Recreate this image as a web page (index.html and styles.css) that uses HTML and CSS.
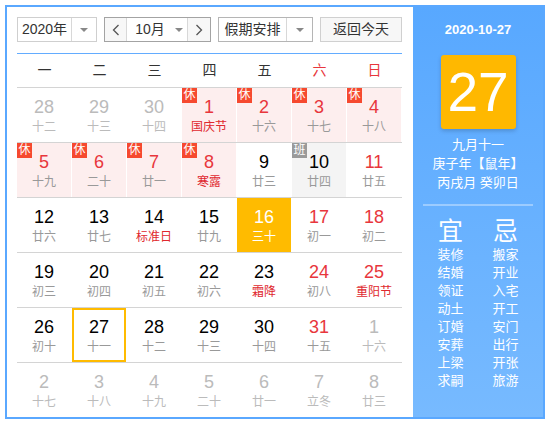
FILE: index.html
```html
<!DOCTYPE html>
<html lang="zh-CN">
<head>
<meta charset="utf-8">
<link rel="stylesheet" href="styles.css">
</head>
<body>
<div class="cal">
  <div class="main">
    <div class="toolbar">
      <div class="sel sel-year">
        <span class="sel-text">2020年</span>
        <span class="sel-arrow"><i class="tri"></i></span>
      </div>
      <div class="sel sel-month">
        <span class="nav nav-prev"><svg width="8" height="12" viewBox="0 0 8 12"><polyline points="6.5,1 1.5,6 6.5,11" fill="none" stroke="#555" stroke-width="1.3"/></svg></span>
        <span class="month-text">10月<i class="tri"></i></span>
        <span class="nav nav-next"><svg width="8" height="12" viewBox="0 0 8 12"><polyline points="1.5,1 6.5,6 1.5,11" fill="none" stroke="#555" stroke-width="1.3"/></svg></span>
      </div>
      <div class="sel sel-holiday">
        <span class="sel-text">假期安排</span>
        <span class="sel-arrow"><i class="tri"></i></span>
      </div>
      <div class="btn-today">返回今天</div>
    </div>
    <div class="week-head">
      <span>一</span><span>二</span><span>三</span><span>四</span><span>五</span><span class="red">六</span><span class="red">日</span>
    </div>
    <div class="row">
      <div class="cell other"><div class="num">28</div><div class="lunar">十二</div></div>
      <div class="cell other"><div class="num">29</div><div class="lunar">十三</div></div>
      <div class="cell other"><div class="num">30</div><div class="lunar">十四</div></div>
      <div class="cell rest"><span class="badge">休</span><div class="num">1</div><div class="lunar fest">国庆节</div></div>
      <div class="cell rest"><span class="badge">休</span><div class="num">2</div><div class="lunar">十六</div></div>
      <div class="cell rest"><span class="badge">休</span><div class="num">3</div><div class="lunar">十七</div></div>
      <div class="cell rest"><span class="badge">休</span><div class="num">4</div><div class="lunar">十八</div></div>
    </div>
    <div class="row">
      <div class="cell rest"><span class="badge">休</span><div class="num">5</div><div class="lunar">十九</div></div>
      <div class="cell rest"><span class="badge">休</span><div class="num">6</div><div class="lunar">二十</div></div>
      <div class="cell rest"><span class="badge">休</span><div class="num">7</div><div class="lunar">廿一</div></div>
      <div class="cell rest"><span class="badge">休</span><div class="num">8</div><div class="lunar fest">寒露</div></div>
      <div class="cell"><div class="num">9</div><div class="lunar">廿三</div></div>
      <div class="cell work"><span class="badge badge-work">班</span><div class="num">10</div><div class="lunar">廿四</div></div>
      <div class="cell weekend"><div class="num">11</div><div class="lunar">廿五</div></div>
    </div>
    <div class="row">
      <div class="cell"><div class="num">12</div><div class="lunar">廿六</div></div>
      <div class="cell"><div class="num">13</div><div class="lunar">廿七</div></div>
      <div class="cell"><div class="num">14</div><div class="lunar fest">标准日</div></div>
      <div class="cell"><div class="num">15</div><div class="lunar">廿九</div></div>
      <div class="cell today"><div class="num">16</div><div class="lunar">三十</div></div>
      <div class="cell weekend"><div class="num">17</div><div class="lunar">初一</div></div>
      <div class="cell weekend"><div class="num">18</div><div class="lunar">初二</div></div>
    </div>
    <div class="row">
      <div class="cell"><div class="num">19</div><div class="lunar">初三</div></div>
      <div class="cell"><div class="num">20</div><div class="lunar">初四</div></div>
      <div class="cell"><div class="num">21</div><div class="lunar">初五</div></div>
      <div class="cell"><div class="num">22</div><div class="lunar">初六</div></div>
      <div class="cell"><div class="num">23</div><div class="lunar fest">霜降</div></div>
      <div class="cell weekend"><div class="num">24</div><div class="lunar">初八</div></div>
      <div class="cell weekend"><div class="num">25</div><div class="lunar fest">重阳节</div></div>
    </div>
    <div class="row">
      <div class="cell"><div class="num">26</div><div class="lunar">初十</div></div>
      <div class="cell selected"><div class="num">27</div><div class="lunar">十一</div></div>
      <div class="cell"><div class="num">28</div><div class="lunar">十二</div></div>
      <div class="cell"><div class="num">29</div><div class="lunar">十三</div></div>
      <div class="cell"><div class="num">30</div><div class="lunar">十四</div></div>
      <div class="cell weekend"><div class="num">31</div><div class="lunar">十五</div></div>
      <div class="cell other"><div class="num">1</div><div class="lunar">十六</div></div>
    </div>
    <div class="row">
      <div class="cell other"><div class="num">2</div><div class="lunar">十七</div></div>
      <div class="cell other"><div class="num">3</div><div class="lunar">十八</div></div>
      <div class="cell other"><div class="num">4</div><div class="lunar">十九</div></div>
      <div class="cell other"><div class="num">5</div><div class="lunar">二十</div></div>
      <div class="cell other"><div class="num">6</div><div class="lunar">廿一</div></div>
      <div class="cell other"><div class="num">7</div><div class="lunar">立冬</div></div>
      <div class="cell other"><div class="num">8</div><div class="lunar">廿三</div></div>
    </div>
  </div>
  <div class="panel">
    <div class="p-date">2020-10-27</div>
    <div class="p-day">27</div>
    <div class="p-lunar">
      <div>九月十一</div>
      <div>庚子年【鼠年】</div>
      <div>丙戌月 癸卯日</div>
    </div>
    <div class="p-divider"></div>
    <div class="yiji">
      <div class="yj-col">
        <div class="yj-title">宜</div>
        <div>装修</div><div>结婚</div><div>领证</div><div>动土</div><div>订婚</div><div>安葬</div><div>上梁</div><div>求嗣</div>
      </div>
      <div class="yj-col">
        <div class="yj-title">忌</div>
        <div>搬家</div><div>开业</div><div>入宅</div><div>开工</div><div>安门</div><div>出行</div><div>开张</div><div>旅游</div>
      </div>
    </div>
  </div>
</div>
</body>
</html>
```
FILE: styles.css
```css
html, body {
  margin: 0;
  padding: 0;
  background: #fff;
}
body {
  font-family: "Liberation Sans", Arial, "Noto Sans CJK SC", sans-serif;
  color: #333;
}
.cal {
  margin: 5px;
  width: 540px;
  height: 414px;
  box-sizing: border-box;
  border: 2px solid #5aa8ff;
  display: flex;
  background: #fff;
}
.main {
  width: 406px;
  box-sizing: border-box;
  padding: 10px 11px 0 10px;
}
.toolbar {
  display: flex;
  gap: 7px;
  height: 25px;
}
.sel {
  display: flex;
  box-sizing: border-box;
  height: 25px;
  border: 1px solid #cfcfcf;
  background: #fff;
  font-size: 14px;
  line-height: 23px;
  color: #333;
}
.sel-text {
  flex: 1;
  text-align: center;
}
.sel-arrow {
  width: 24px;
  border-left: 1px solid #d8d8d8;
  display: flex;
  align-items: center;
  justify-content: center;
}
.tri {
  display: inline-block;
  width: 0;
  height: 0;
  border-left: 4px solid transparent;
  border-right: 4px solid transparent;
  border-top: 4px solid #888;
}
.sel-year {
  width: 80px;
}
.sel-month {
  width: 107px;
  border-color: #a3a3a3;
}
.nav {
  width: 21px;
  background: #f7f7f7;
  display: flex;
  align-items: center;
  justify-content: center;
}
.nav-prev {
  border-right: 1px solid #d8d8d8;
}
.nav-next {
  width: 22px;
  border-left: 1px solid #d8d8d8;
}
.month-text {
  flex: 1;
  display: flex;
  align-items: center;
  justify-content: center;
  gap: 10px;
  padding-left: 4px;
}
.sel-holiday {
  width: 95px;
  border-color: #b5b5b5;
}
.sel-holiday .sel-arrow {
  width: 25px;
}
.btn-today {
  width: 82px;
  box-sizing: border-box;
  height: 25px;
  border: 1px solid #d0d0d0;
  background: #f7f7f7;
  text-align: center;
  font-size: 14px;
  line-height: 23px;
  color: #333;
}
.week-head {
  margin-top: 11px;
  border-top: 1px solid #63acff;
  height: 33px;
  display: grid;
  grid-template-columns: repeat(7, 55px);
  font-size: 14px;
  line-height: 33px;
  text-align: center;
  color: #333;
}
.week-head .red {
  color: #e8363c;
}
.row {
  display: grid;
  grid-template-columns: repeat(7, 55px);
  height: 55px;
  box-sizing: border-box;
  border-top: 1px solid #d4d4d4;
}
.cell {
  position: relative;
  height: 54px;
  border-right: 1px solid #fff;
  text-align: center;
  color: #000;
}
.num {
  padding-top: 9px;
  font-size: 18px;
  line-height: 20px;
}
.lunar {
  margin-top: 2px;
  font-size: 12px;
  line-height: 16px;
  color: #999;
}
.lunar.fest {
  color: #e0282e;
}
.rest {
  background: #fdeeee;
}
.rest .num, .weekend .num {
  color: #e8363c;
}
.work {
  background: #f4f4f4;
}
.other .num, .other .lunar {
  color: #bbb;
}
.today {
  background: #ffbb00;
}
.today .num, .today .lunar {
  color: #fff;
}
.selected {
  box-shadow: inset 0 0 0 2px #ffbb00;
}
.badge {
  position: absolute;
  left: 0;
  top: 0;
  width: 15px;
  height: 15px;
  background: #f6492f;
  color: #fff;
  font-size: 12px;
  line-height: 15px;
  text-align: center;
}
.badge-work {
  background: #9a9a9a;
}
.panel {
  width: 130px;
  background: linear-gradient(#58a8ff, #77baff);
  color: #fff;
  text-align: center;
}
.p-date {
  margin-top: 14px;
  font-size: 13px;
  font-weight: bold;
  line-height: 18px;
}
.p-day {
  margin: 16px auto 0;
  width: 75px;
  height: 74px;
  border-radius: 3px;
  background: #ffb800;
  box-shadow: 0 2px 4px rgba(0, 0, 0, 0.18);
  font-size: 55px;
  line-height: 74px;
  color: #fff;
}
.p-lunar {
  margin-top: 6px;
  font-size: 13px;
  line-height: 19px;
}
.p-divider {
  margin: 12px auto 0;
  width: 110px;
  height: 2px;
  background: rgba(255, 255, 255, 0.35);
}
.yiji {
  margin: 10px auto 0;
  width: 110px;
  display: flex;
}
.yj-col {
  flex: 1;
  font-size: 13px;
  line-height: 18px;
}
.yj-title {
  font-size: 25px;
  line-height: 30px;
}
```
